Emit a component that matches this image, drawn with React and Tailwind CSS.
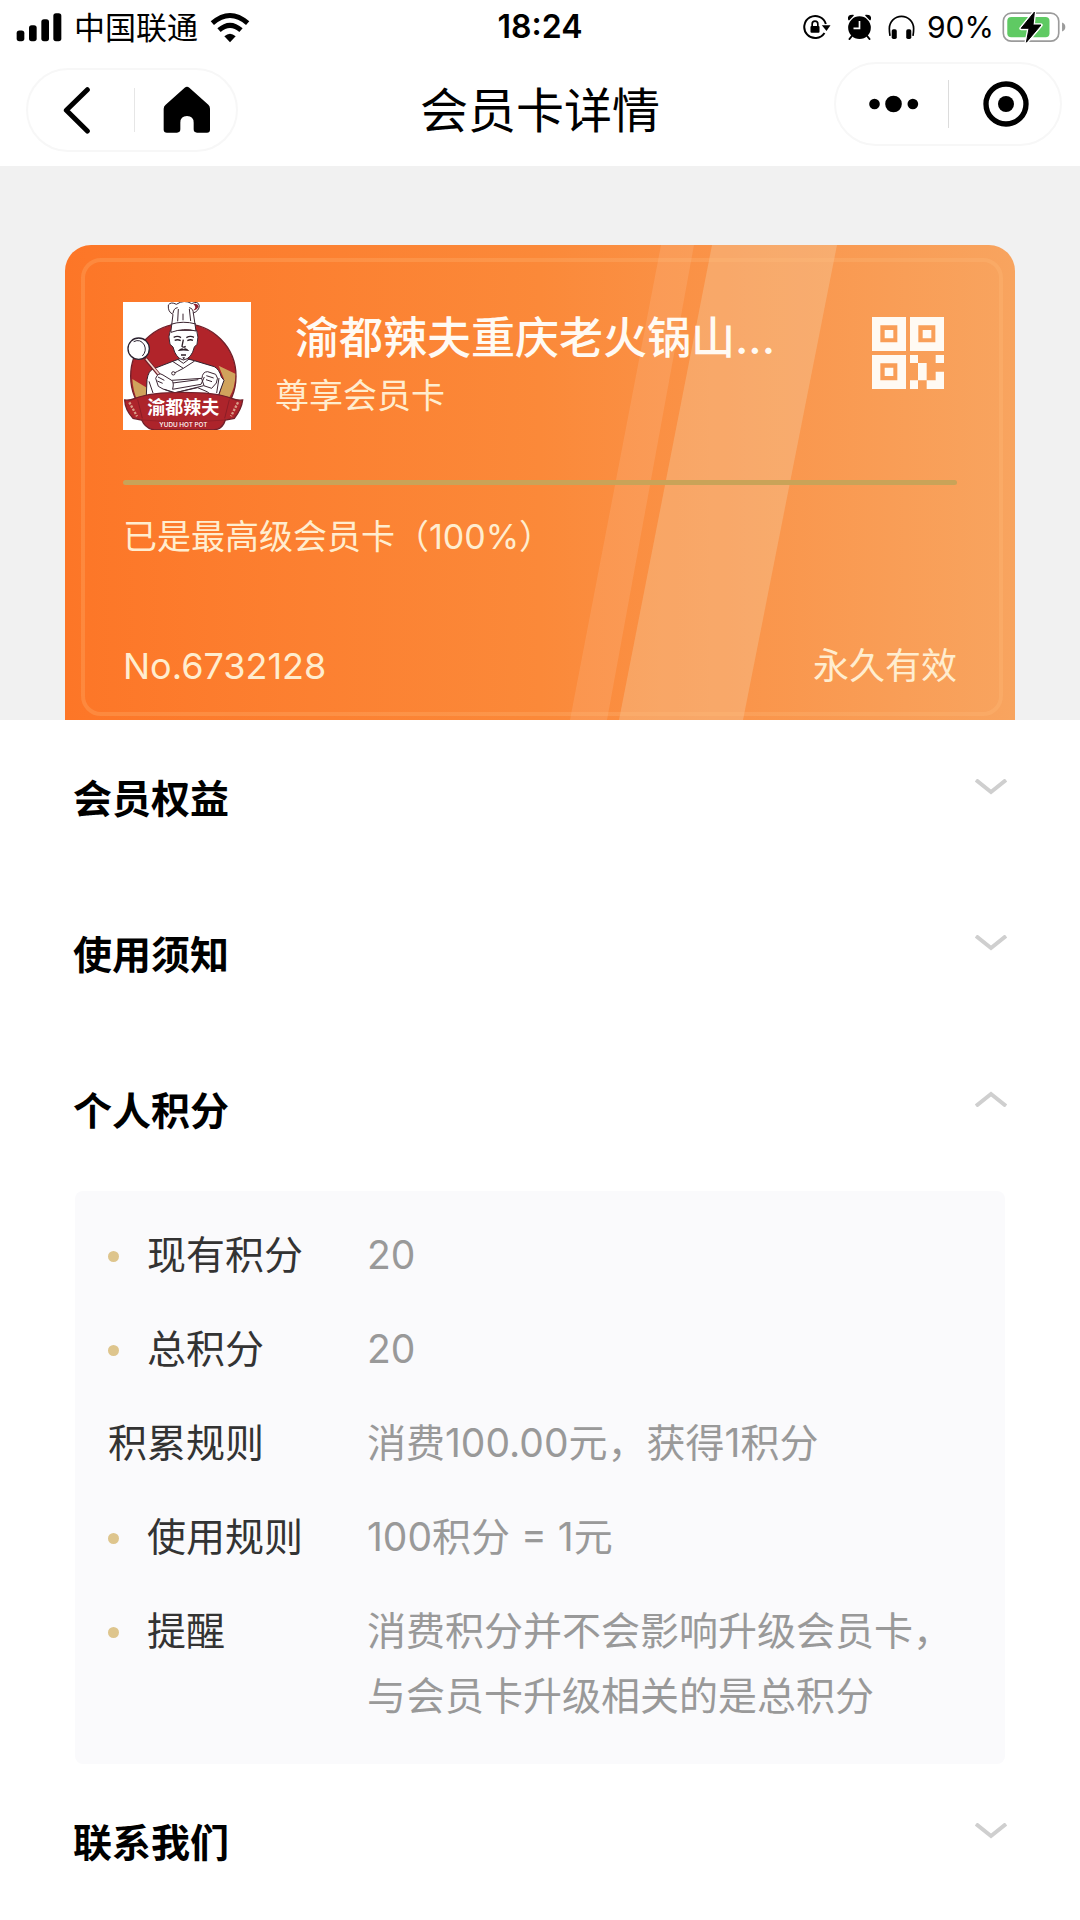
import React, { useState } from 'react';

const sections = [
  { id: 'benefits', title: '会员权益' },
  { id: 'notice', title: '使用须知' },
  { id: 'points', title: '个人积分' },
  { id: 'contact', title: '联系我们' },
];

const pointRows = [
  { label: '现有积分', value: '20', dot: true },
  { label: '总积分', value: '20', dot: true },
  { label: '积累规则', value: '消费100.00元，获得1积分', dot: false },
  { label: '使用规则', value: '100积分 = 1元', dot: true },
  { label: '提醒', value: '消费积分并不会影响升级会员卡，与会员卡升级相关的是总积分', dot: true },
];

const SignalIcon = () => (
  <svg viewBox="50 36 138 86" className="w-[46px] h-[29px]" aria-hidden="true">
    <rect x="52" y="88" width="23" height="32" rx="8" />
    <rect x="89" y="72" width="23" height="48" rx="8" />
    <rect x="126" y="54" width="23" height="66" rx="8" />
    <rect x="162" y="36" width="24" height="84" rx="8" />
  </svg>
);

const WifiIcon = () => (
  <svg viewBox="634 30 120 92" className="w-10 h-[31px]" aria-hidden="true">
    <path d="M641 63Q694 17 747 63" fill="none" stroke="#000" strokeWidth="15" />
    <path d="M661 84Q694 55 727 84" fill="none" stroke="#000" strokeWidth="15" />
    <path d="M677 102Q694 87 711 102L694 120Z" />
  </svg>
);

const RotationLockIcon = () => (
  <svg viewBox="256 44 86 78" className="w-[29px] h-[26px]" aria-hidden="true">
    <path d="M327 74A33 33 0 1 0 323 101" fill="none" stroke="#000" strokeWidth="6" />
    <path d="M315 78H341L329 95Z" />
    <rect x="281" y="80" width="27" height="20" rx="3" />
    <path d="M286 82V74A8.500 8.500 0 0 1 303 74V82" fill="none" stroke="#000" strokeWidth="5" />
  </svg>
);

const AlarmIcon = () => (
  <svg viewBox="386 40 74 78" className="w-[25px] h-[26px]" aria-hidden="true">
    <circle cx="423" cy="81" r="34" />
    <path d="M391 57Q387 43 404 44ZM455 57Q459 43 442 44Z" stroke="#000" strokeWidth="4" strokeLinejoin="round" />
    <path d="M400 106L393 115M446 106L453 115" stroke="#000" strokeWidth="6" strokeLinecap="round" />
    <path d="M423 61V83H405" fill="none" stroke="#fff" strokeWidth="5" />
  </svg>
);

const HeadphonesIcon = () => (
  <svg viewBox="506 44 80 74" className="w-[27px] h-[25px]" aria-hidden="true">
    <path d="M512 106Q510 95 510 84A35 35 0 0 1 582 84Q582 95 580 106" fill="none" stroke="#000" strokeWidth="5" />
    <rect x="517" y="86" width="15" height="29" rx="5" />
    <rect x="560" y="86" width="15" height="29" rx="5" />
  </svg>
);

const BatteryIcon = () => (
  <svg viewBox="846 30 194 96" className="w-16 h-8" aria-hidden="true">
    <rect x="850" y="36" width="168" height="85" rx="24" fill="#fff" stroke="#9b9b9b" strokeWidth="5" />
    <rect x="862" y="48" width="128" height="61" rx="12" fill="#5fca63" />
    <path d="M1028 64Q1038 68 1038 78T1028 92Z" fill="#9b9b9b" />
    <path d="M944 33L904 82H928L920 124L964 72H940Z" stroke="#fff" strokeWidth="11" strokeLinejoin="round" />
    <path d="M944 33L904 82H928L920 124L964 72H940Z" stroke="#000" strokeWidth="3" strokeLinejoin="round" />
  </svg>
);

const BackIcon = () => (
  <svg viewBox="192 256 84 144" className="w-7 h-12" aria-hidden="true">
    <path d="M265 267L202 329L265 391" fill="none" stroke="#000" strokeWidth="15" strokeLinecap="round" strokeLinejoin="round" />
  </svg>
);

const HomeIcon = () => (
  <svg viewBox="482 258 144 144" className="w-12 h-12" aria-hidden="true">
    <path d="M547 263Q554 258 561 263L618 314Q623 319 623 326V389Q623 398 614 398H584Q574 398 574 388V368Q574 348 554 348T534 368V388Q534 398 524 398H494Q484 398 484 389V326Q484 319 490 314Z" />
  </svg>
);

const MoreIcon = () => (
  <svg viewBox="448 288 152 54" className="w-[51px] h-[18px]" aria-hidden="true">
    <circle cx="467" cy="315" r="16" />
    <circle cx="524" cy="315" r="25" />
    <circle cx="582" cy="315" r="16" />
  </svg>
);

const CloseIcon = () => (
  <svg viewBox="786 244 138 138" className="w-[46px] h-[46px]" aria-hidden="true">
    <circle cx="855" cy="313" r="60" fill="none" stroke="#000" strokeWidth="16" />
    <circle cx="855" cy="313" r="24" />
  </svg>
);

const QrIcon = () => (
  <svg viewBox="96 82 216 216" className="w-[72px] h-[72px] fill-[#fffaf3]" aria-hidden="true">
    {/* три угловых маркера */}
    <path fillRule="evenodd" d="M96 82h102v102H96ZM121 107v51h51v-51ZM134 121h26v25h-26Z" />
    <path fillRule="evenodd" d="M210 82h102v102H210ZM235 107v51h51v-51ZM248 121h26v25h-26Z" />
    <path fillRule="evenodd" d="M96 196h102v102H96ZM121 221v51h51v-51ZM134 234h26v25h-26Z" />
    <path d="M210 196h24v24h-24ZM287 196h25v24h-25ZM234 220h26v52h-26ZM287 246h25v52h-52v-26h27ZM210 272h24v26h-24Z" />
  </svg>
);

const Chevron = ({ open }) => (
  <svg viewBox="0 0 32 16" className="w-8 h-4" fill="none" stroke="#cfcfcf" strokeWidth="4" aria-hidden="true">
    {open ? <path d="M1 15L16 3L31 15" /> : <path d="M1 1L16 13L31 1" />}
  </svg>
);

const ShopLogo = () => (
  <svg viewBox="38 37 384 384" className="w-32 h-32 shrink-0" role="img" aria-label="渝都辣夫">
    <rect x="38" y="37" width="384" height="384" fill="#fff" />
    <circle cx="219" cy="260" r="158" fill="#b1242a" stroke="#71202a" strokeWidth="4" />
    <path d="M66 268L112 296L106 335H82Q68 304 66 268Z" fill="#d0a35c" />
    <path d="M325 228L375 252Q376 292 356 325H325L341 268Z" fill="#d0a35c" />
    {/* китель */}
    <path d="M108 318L110 270Q114 244 128 238L190 214L218 204L252 213L312 231Q326 238 333 262L341 272L324 318Z" fill="#fff" stroke="#33232f" strokeWidth="3" />
    {/* лицо и колпак */}
    <path d="M180 122Q172 140 179 164L188 172Q196 206 219 211Q244 207 252 172L260 164Q266 142 259 122Z" fill="#fff" stroke="#3b2531" strokeWidth="3" />
    <path d="M182 122L188 74Q172 67 174 46Q182 35 198 44Q222 28 244 42Q263 32 267 48Q266 64 249 70L257 124Q220 114 182 128Z" fill="#fff" stroke="#3b2531" strokeWidth="3" strokeLinejoin="round" />
    <path d="M181 104Q218 92 257 103M204 58L202 95M218 72V92M237 58L241 94M188 71Q190 55 202 54M249 71Q249 56 236 54" fill="none" stroke="#3b2531" strokeWidth="3" />
    <path d="M249 43Q262 39 265 50Q260 62 249 62Q261 53 249 43Z" fill="#8e2030" />
    <path d="M190 143Q202 137 212 144M228 144Q240 137 251 143M193 152Q203 148 211 153M231 153Q240 148 248 152M219 150L215 170Q219 175 226 170M212 196H227" fill="none" stroke="#2f2029" strokeWidth="4" />
    <path d="M202 184Q213 172 220 178Q227 172 237 184Q220 181 202 184Z" fill="#2f2029" />
    <path d="M216 203H224L220 210Z" fill="#2f2029" />
    <path d="M188 216L219 236L253 214M219 221L202 209M219 236Q200 246 188 252M219 221L238 207" fill="none" stroke="#3b2531" strokeWidth="3" />
    <circle cx="189" cy="251" r="5" fill="#fff" stroke="#3b2531" strokeWidth="3" />
    {/* половник */}
    <path d="M105 206L158 270" stroke="#71202a" strokeWidth="11" />
    <path d="M107 207L158 269" stroke="#f6d9cf" strokeWidth="5" />
    <circle cx="85" cy="177" r="32" fill="#fff" stroke="#2c2330" strokeWidth="4" />
    <path d="M70 156Q90 146 102 166Q110 184 96 199" fill="none" stroke="#2c2330" strokeWidth="3" />
    {/* скрещенные руки */}
    <path d="M136 266Q144 246 158 256L184 272L275 266Q276 246 292 246L316 254Q326 264 318 280L304 296L280 288L192 310L158 298L144 290Z" fill="#fff" stroke="#3b2531" strokeWidth="3" strokeLinejoin="round" />
    <path d="M143 262L162 272M141 274L157 281M184 272Q192 278 187 298M187 280L264 270M186 299L272 284L282 262M274 267L281 288M288 258L310 265M287 270L305 276M162 299L194 309L262 294L290 306L307 318M116 275L128 310M326 265L319 310" fill="none" stroke="#3b2531" strokeWidth="3" />
    {/* лента */}
    <path d="M43 331Q58 333 74 326Q120 308 219 308T364 326Q380 333 397 331Q394 358 372 386L345 391Q336 421 306 421H134Q106 418 94 391L68 386Q44 360 43 331Z" fill="#ad242b" stroke="#71202a" strokeWidth="4" />
    <path d="M94 391Q218 401 345 391" fill="none" stroke="#8c1d26" strokeWidth="2" />
    <path d="M82 330L96 386M357 330L343 386" stroke="#8c1d26" strokeWidth="3" />
    <text x="219" y="372" textAnchor="middle" fontSize="54" fontWeight="700" fill="#fff" fontFamily="'Noto Sans CJK SC', sans-serif">渝都辣夫</text>
    <text x="219" y="411" textAnchor="middle" fontSize="19" fontWeight="500" fill="#fff" fontFamily="Inter, sans-serif">YUDU HOT POT</text>
    <path d="M57 338L80 380M383 338L362 380" stroke="#d9a08a" strokeWidth="7" strokeDasharray="7 4" />
  </svg>
);

const StatusBar = () => (
  <div className="grid grid-cols-3 items-center h-[54px] px-[14px]">
    <div className="flex items-center gap-3 pl-[2px]">
      <SignalIcon />
      <span className="text-[31px] leading-none">中国联通</span>
      <WifiIcon />
    </div>
    <span className="text-center text-[32px] leading-none font-semibold">18:24</span>
    <div className="flex items-center justify-end gap-4">
      <RotationLockIcon />
      <AlarmIcon />
      <HeadphonesIcon />
      <div className="flex items-center gap-2 -ml-1">
        <span className="text-[30px] leading-none">90%</span>
        <BatteryIcon />
      </div>
    </div>
  </div>
);

const NavBar = () => (
  <div className="grid grid-cols-[1fr_auto_1fr] items-center h-28 px-[18px]">
    <div className="flex items-center w-[212px] h-[84px] ml-2 rounded-full border-2 border-[#f7f7f7]">
      <button type="button" aria-label="返回" className="flex-1 flex justify-center pr-2">
        <BackIcon />
      </button>
      <span className="w-px h-11 mr-1 bg-[#e6e6e6]" />
      <button type="button" aria-label="首页" className="flex-1 flex justify-center">
        <HomeIcon />
      </button>
    </div>
    <h1 className="pt-[2px] text-[48px] leading-none">会员卡详情</h1>
    <div className="flex items-center justify-self-end w-[228px] h-[84px] mb-3 rounded-full border-2 border-[#f7f7f7]">
      <button type="button" aria-label="更多" className="flex-1 flex justify-center pl-1">
        <MoreIcon />
      </button>
      <span className="w-px h-12 mr-1 bg-[#dcdcdc]" />
      <button type="button" aria-label="关闭" className="flex-1 flex justify-center">
        <CloseIcon />
      </button>
    </div>
  </div>
);

const MemberCard = () => (
  <div className="relative overflow-hidden rounded-t-[26px] bg-linear-to-r from-[#fd7627] via-[#fb8939] to-[#f8a45f] px-[58px] pt-[57px] pb-[29px] text-[#ffedcf]">
    {/* блики и внутренняя рамка */}
    <svg viewBox="0 0 950 475" preserveAspectRatio="none" className="absolute inset-0 w-full h-full" aria-hidden="true">
      <path d="M596 0H629L542 475H505Z" fill="#fff" fillOpacity="0.1" />
      <path d="M647 0H772L678 475H554Z" fill="#f5e0c0" fillOpacity="0.28" />
    </svg>
    <div className="absolute left-4 right-3 top-[13px] bottom-1 rounded-[20px] border-4 border-[#ffc080]/25" />

    <div className="relative">
      <div className="flex items-start">
        <ShopLogo />
        <div className="flex-1 min-w-0 pl-6 pt-[9px]">
          <h2 className="pl-5 text-[44px] leading-[54px] font-medium text-[#fffaf3] whitespace-nowrap">渝都辣夫重庆老火锅山...</h2>
          <p className="text-[34px] leading-[62px]">尊享会员卡</p>
        </div>
        <button type="button" aria-label="会员二维码" className="mt-[15px] mr-[13px]">
          <QrIcon />
        </button>
      </div>
      <div className="h-[5px] mt-[50px] rounded-full bg-[#c9a358]" />
      <p className="mt-[27px] text-[34px] leading-[50px]">已是最高级会员卡（100%）</p>
      <div className="flex items-center justify-between mt-[79px] text-[36px] leading-[50px]">
        <span>No.6732128</span>
        <span>永久有效</span>
      </div>
    </div>
  </div>
);

const PointsPanel = () => (
  <dl className="flex flex-col gap-[29px] mt-[3px] mx-[2px] rounded-lg bg-[#fafafc] pt-[31px] pb-9 pl-[33px] pr-12 text-[39px] leading-[65px]">
    {pointRows.map((row) => (
      <div key={row.label} className="flex items-start">
        <dt className="flex items-center w-[259px] shrink-0 text-[#333]">
          {row.dot && <span className="w-[11px] h-[11px] mt-1 mr-7 rounded-full bg-[#dec58d]" />}
          {row.label}
        </dt>
        <dd className="flex-1 text-[#999]">{row.value}</dd>
      </div>
    ))}
  </dl>
);

const App = () => {
  const [openId, setOpenId] = useState('points');

  return (
    <div className="min-h-screen bg-white text-black font-[Inter,'Noto_Sans_CJK_SC',sans-serif]">
      <header>
        <StatusBar />
        <NavBar />
      </header>

      <main>
        <section className="bg-[#f1f1f1] px-[65px] pt-[79px]">
          <MemberCard />
        </section>

        <div className="px-[73px]">
          {sections.map(({ id, title }) => (
            <section key={id}>
              <h3>
                <button
                  type="button"
                  aria-expanded={openId === id}
                  onClick={() => setOpenId(openId === id ? null : id)}
                  className="flex items-center justify-between w-full h-39 text-[39px] leading-none font-bold"
                >
                  {title}
                  <span className="mb-[22px]">
                    <Chevron open={openId === id} />
                  </span>
                </button>
              </h3>
              {id === 'points' && openId === id && <PointsPanel />}
            </section>
          ))}
        </div>
      </main>
    </div>
  );
};

export default App;
